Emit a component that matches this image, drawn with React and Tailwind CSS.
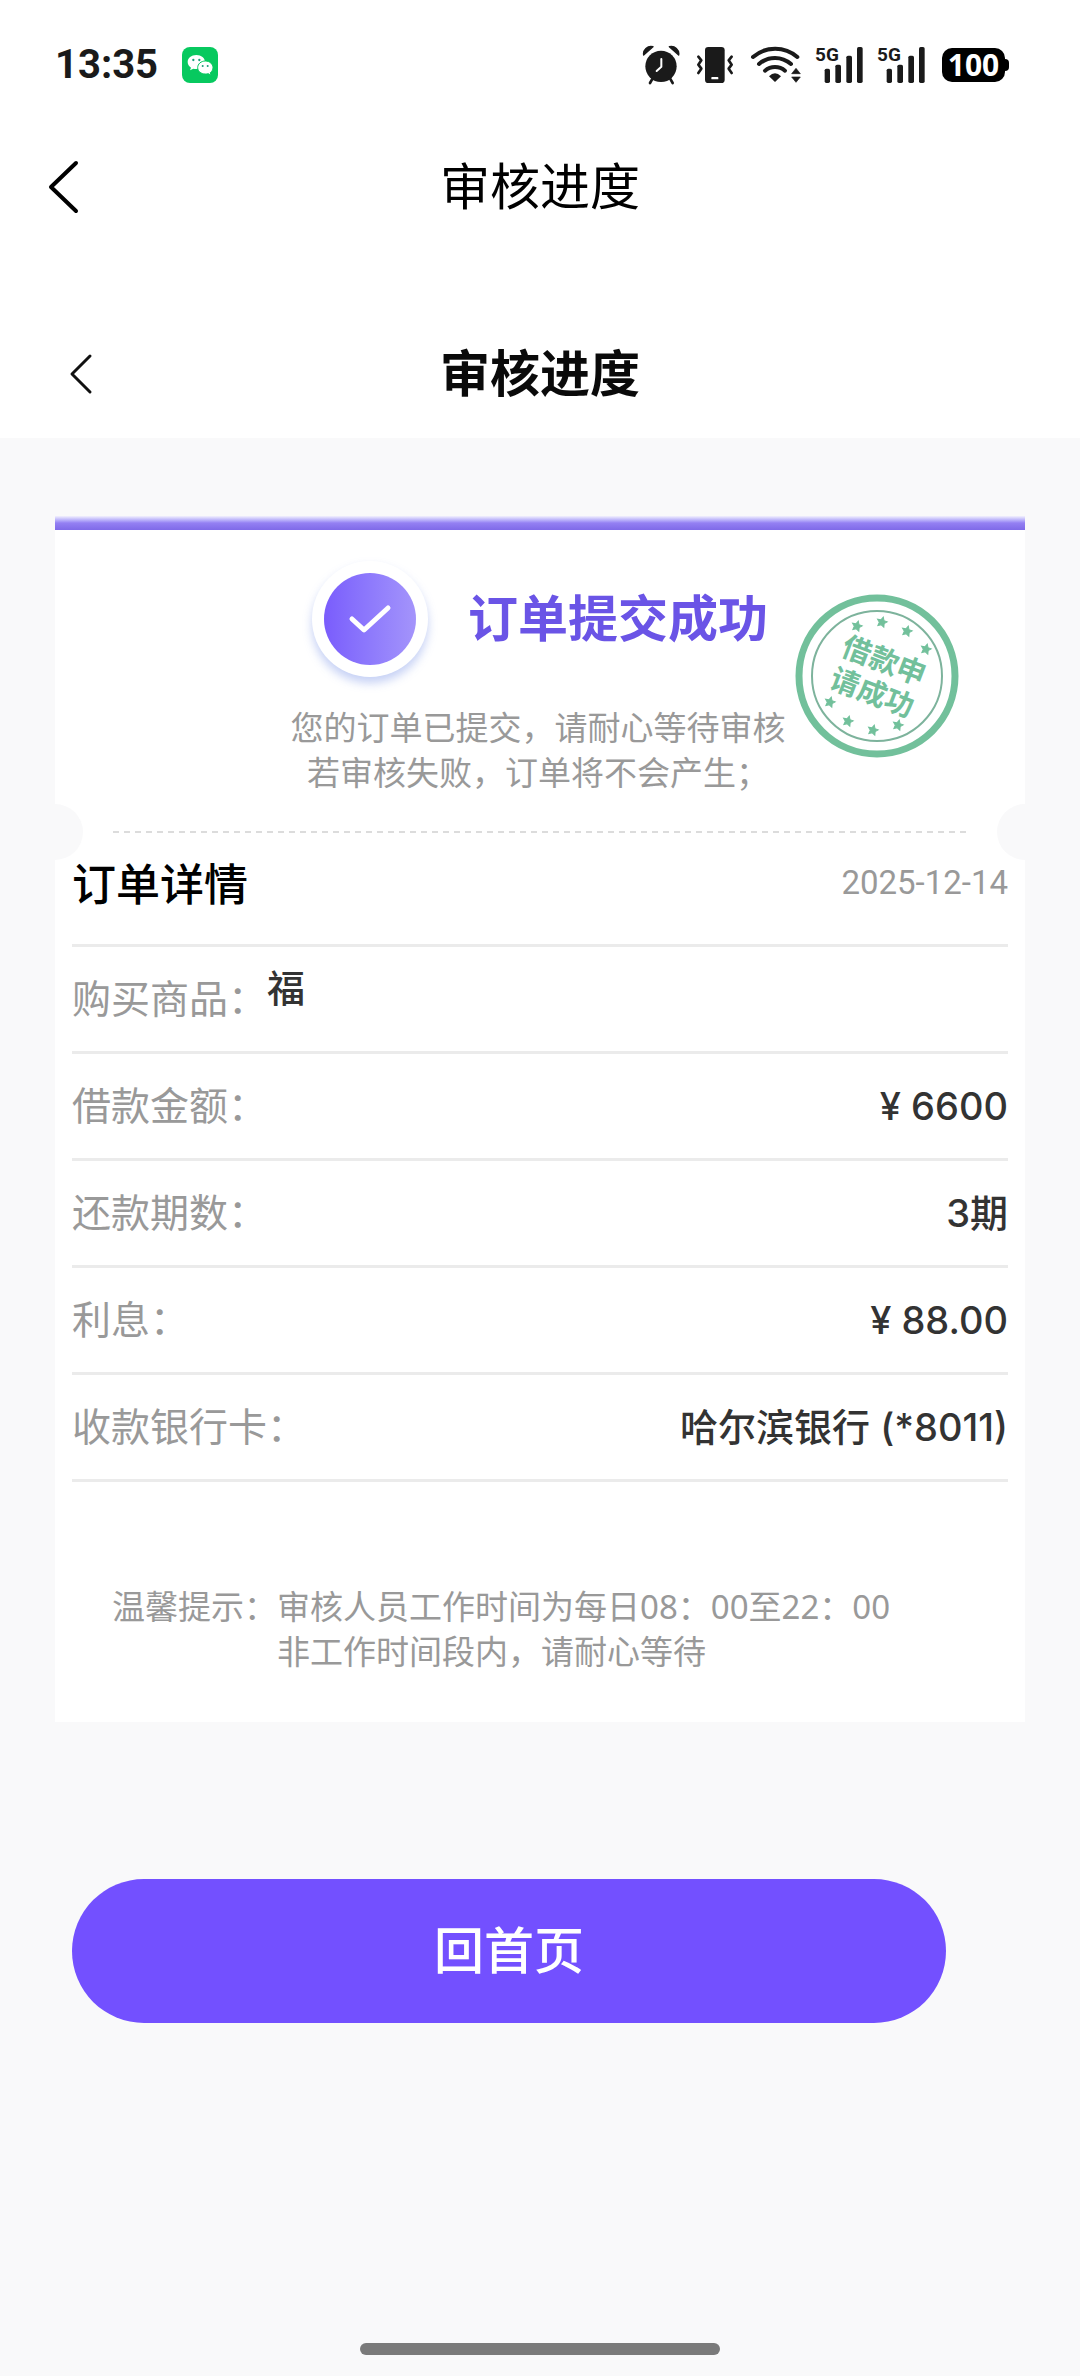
const DETAILS = [
  { label: "借款金额：", value: "¥ 6600" },
  { label: "还款期数：", value: "3期" },
  { label: "利息：", value: "¥ 88.00" },
  { label: "收款银行卡：", value: "哈尔滨银行 (*8011)" },
];

const STARS = [
  [62, 33], [87, 29], [112, 38], [131, 56],
  [35, 109], [53, 128], [78, 137], [103, 132],
];

function WeChatIcon() {
  return (
    <svg width="36" height="36" viewBox="0 0 108 108" role="img" aria-label="微信">
      <rect width="108" height="108" rx="24" fill="#07c95f" />
      <path d="M43 24c-15 0-26 9-26 21 0 7 4 13 10 17l-3 8 10-5c3 1 6 1 9 1 15 0 26-9 26-21S58 24 43 24z" fill="#fff" />
      <path d="M70 42c13 0 23 9 23 20 0 6-3 11-8 15l2 8-8-5c-3 1-6 1-9 1-13 0-23-8-23-19s10-20 23-20z" fill="#fff" stroke="#07c95f" strokeWidth="3" />
      <g fill="#1a9f7a">
        <circle cx="34" cy="39" r="3.5" />
        <circle cx="52" cy="39" r="3.5" />
        <circle cx="62" cy="57" r="3" />
        <circle cx="77" cy="57" r="3" />
      </g>
    </svg>
  );
}

function AlarmIcon() {
  return (
    <svg width="38" height="40" viewBox="58 72 114 120" aria-hidden="true">
      <circle cx="115" cy="136" r="47" fill="#1a1a1a" />
      <path d="M63 102c-3-14 12-30 28-25z" fill="#1a1a1a" stroke="#1a1a1a" strokeWidth="4" strokeLinejoin="round" />
      <path d="M168 102c3-14-12-30-28-25z" fill="#1a1a1a" stroke="#1a1a1a" strokeWidth="4" strokeLinejoin="round" />
      <path d="M90 172l-8 14M142 172l8 14" stroke="#1a1a1a" strokeWidth="8" strokeLinecap="round" />
      <path d="M116 114v23l-14 13" fill="none" stroke="#fff" strokeWidth="6" strokeLinecap="round" strokeLinejoin="round" />
    </svg>
  );
}

function VibrateIcon() {
  return (
    <svg width="38" height="40" viewBox="222 72 114 120" aria-hidden="true">
      <rect x="249" y="78" width="59" height="108" rx="10" fill="#1a1a1a" />
      <rect x="268" y="168" width="21" height="7" rx="2" fill="#fff" />
      <g fill="none" stroke="#1a1a1a" strokeWidth="8" strokeLinecap="round" strokeLinejoin="round">
        <path d="M229 107l9 11-9 13 9 12-9 13" />
        <path d="M329 107l-9 11 9 13-9 12 9 13" />
      </g>
    </svg>
  );
}

function WifiIcon() {
  return (
    <svg width="52" height="40" viewBox="384 72 156 120" aria-hidden="true">
      <g fill="none" stroke="#1a1a1a" strokeWidth="12" strokeLinecap="round">
        <path d="M393 108a101 101 0 0 1 133 0" />
        <path d="M411 129a72 72 0 0 1 96 0" />
        <path d="M429 149a46 46 0 0 1 60 0" />
      </g>
      <path d="M441 166q18-18 36 0l-18 17z" fill="#1a1a1a" />
      <path d="M522 142l13 16h-26zM522 184l13-16h-26z" fill="#1a1a1a" stroke="#1a1a1a" strokeWidth="2" strokeLinejoin="round" />
    </svg>
  );
}

function SignalIcon() {
  return (
    <svg width="50" height="56" viewBox="576 48 150 168" role="img" aria-label="5G">
      <text x="579" y="119" fontSize="57" fontWeight="700" fill="#1a1a1a" className="font-[Roboto,sans-serif]">5G</text>
      <g fill="#1a1a1a">
        <rect x="608" y="143" width="16" height="43" rx="5" />
        <rect x="640" y="131" width="17" height="55" rx="5" />
        <rect x="673" y="104" width="17" height="82" rx="5" />
        <rect x="705" y="78" width="17" height="108" rx="5" />
      </g>
    </svg>
  );
}

function StatusBar() {
  return (
    <div className="flex h-[130px] items-center justify-between pl-[55px] pr-[71px]">
      <div className="flex items-center gap-6">
        <span className="font-[Roboto,sans-serif] text-[40px] leading-none font-bold text-[#1a1a1a]">13:35</span>
        <WeChatIcon />
      </div>
      <div className="flex items-center">
        <AlarmIcon />
        <span className="w-4" />
        <VibrateIcon />
        <span className="w-4" />
        <WifiIcon />
        <span className="w-3" />
        <SignalIcon />
        <span className="w-3" />
        <SignalIcon />
        <span className="w-4" />
        <div className="flex items-center">
          <span className="flex h-[34px] w-[63px] items-center justify-center rounded-[10px] bg-black font-['Noto_Sans',sans-serif] text-[30px] leading-none font-bold text-white">
            100
          </span>
          <span className="h-3 w-1 rounded-r bg-black" />
        </div>
      </div>
    </div>
  );
}

function NavBar({ heavy = false }) {
  return (
    <header
      className={
        heavy
          ? "grid h-32 grid-cols-[1fr_auto_1fr] items-center px-[68px]"
          : "mb-[66px] grid h-[114px] grid-cols-[1fr_auto_1fr] items-center px-[46px]"
      }
    >
      <button type="button" aria-label="返回" className="justify-self-start">
        {heavy ? (
          <svg width="26" height="44" viewBox="0 0 26 44" fill="none" stroke="#111" strokeWidth="3" strokeLinecap="round" strokeLinejoin="round">
            <path d="M22 4L4 22l18 18" />
          </svg>
        ) : (
          <svg width="34" height="56" viewBox="0 0 34 56" fill="none" stroke="#000" strokeWidth="4" strokeLinecap="round" strokeLinejoin="round">
            <path d="M30 4L5 28l25 24" />
          </svg>
        )}
      </button>
      <h1 className={heavy ? "text-[50px] leading-none font-bold text-[#0a0a0a]" : "text-[50px] leading-none text-black"}>
        审核进度
      </h1>
      <span />
    </header>
  );
}

function CheckBadge() {
  return (
    <span className="flex size-[116px] items-center justify-center rounded-full bg-white shadow-[0_6px_10px_rgba(112,140,230,0.4)]">
      <span className="flex size-[92px] items-center justify-center rounded-full bg-linear-to-r from-[#7a5cfc] to-[#a494fb]">
        <svg width="44" height="32" viewBox="0 0 44 32" fill="none" stroke="#fff" strokeWidth="5" strokeLinecap="round" strokeLinejoin="round">
          <path d="M4 16l12 11L40 5" />
        </svg>
      </span>
    </span>
  );
}

function Stamp() {
  return (
    <svg width="164" height="166" viewBox="0 0 164 166" className="absolute top-[63px] right-[66px]" role="img" aria-label="借款申请成功">
      <circle cx="82" cy="83" r="78" fill="none" stroke="#72c09b" strokeWidth="7" />
      <circle cx="82" cy="83" r="65" fill="none" stroke="#7db39c" strokeWidth="2" />
      {STARS.map(([x, y]) => (
        <path
          key={`${x}-${y}`}
          transform={`translate(${x} ${y}) rotate(15)`}
          d="M0-5L1.6-1.8L5-1.5L2.5 1L3.1 4.5L0 2.9L-3.1 4.5L-2.5 1L-5-1.5L-1.6-1.8Z"
          fill="#72c09b"
          stroke="#72c09b"
        />
      ))}
      <g fill="#72c09b" fontSize="29" fontWeight="700" textAnchor="middle">
        <text transform="translate(89 68) rotate(21)" y="10">借款申</text>
        <text transform="translate(77 100) rotate(21)" y="10">请成功</text>
      </g>
    </svg>
  );
}

export default function App() {
  return (
    <div className="flex min-h-screen flex-col bg-[#f9f9fa] font-[Inter,'Noto_Sans_CJK_SC',sans-serif]">
      <div className="bg-white">
        <StatusBar />
        <NavBar />
        <NavBar heavy />
      </div>

      <main className="flex grow flex-col pt-[78px]">
        <div className="mx-[55px] h-[14px] bg-linear-to-b from-[#f3f1fd] via-[#9480f3] to-[#7f6ae8]" />
        <section className="relative mx-[55px] bg-white pb-[48px]">
          <Stamp />
          <div className="flex items-center justify-center gap-10 pt-[31px]">
            <CheckBadge />
            <h2 className="text-[50px] leading-none font-bold text-[#6a54e6]">订单提交成功</h2>
          </div>
          <p className="mt-[29px] pr-1 text-center text-[33px] leading-[45px] text-[#999]">
            您的订单已提交，请耐心等待审核
            <br />
            若审核失败，订单将不会产生；
          </p>

          <div className="-mx-7 mt-2 flex h-14 items-center justify-between">
            <span className="size-14 rounded-full bg-[#f9f9fa]" />
            <span className="mx-[30px] h-[2px] grow bg-[repeating-linear-gradient(to_right,#dcdcdc_0_6px,transparent_6px_11px)]" />
            <span className="size-14 rounded-full bg-[#f9f9fa]" />
          </div>

          <div className="mx-[17px]">
            <div className="flex h-[87px] items-start justify-between border-b-3 border-[#ebebeb]">
              <h3 className="text-[44px] leading-[50px] font-medium text-black">订单详情</h3>
              <time dateTime="2025-12-14" className="font-[Roboto,sans-serif] text-[33px] leading-[46px] text-[#999]">
                2025-12-14
              </time>
            </div>
            <dl className="text-[39px] leading-[58px]">
              <div className="flex h-[107px] items-center border-b-3 border-[#ebebeb]">
                <dt className="text-[#999]">购买商品：</dt>
                <dd className="self-start pt-3 text-[38px] font-medium text-[#333]">福</dd>
              </div>
              {DETAILS.map((row) => (
                <div key={row.label} className="flex h-[107px] items-center justify-between border-b-3 border-[#ebebeb]">
                  <dt className="text-[#999]">{row.label}</dt>
                  <dd className="text-[38px] font-medium text-[#333]">{row.value}</dd>
                </div>
              ))}
            </dl>
          </div>

          <div className="mt-[102px] ml-[57px] flex font-['Noto_Sans','Noto_Sans_CJK_SC',sans-serif] text-[33px] leading-[45px] text-[#999]">
            <span>温馨提示：</span>
            <p>
              审核人员工作时间为每日08：00至22：00
              <br />
              非工作时间段内，请耐心等待
            </p>
          </div>
        </section>

        <button
          type="button"
          className="mt-[157px] mr-[134px] ml-[72px] h-36 rounded-full bg-[#7350ff] text-[50px] leading-none font-medium text-white"
        >
          回首页
        </button>
      </main>

      <div className="mx-auto mb-[21px] h-3 w-1/3 rounded-full bg-[#7a7a7a]" />
    </div>
  );
}
